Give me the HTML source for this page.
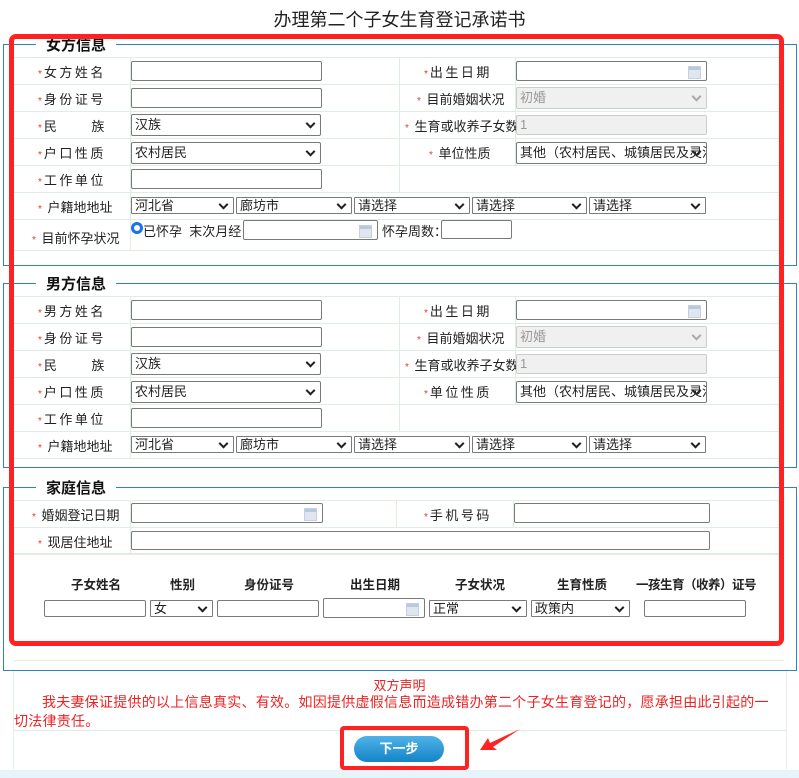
<!DOCTYPE html>
<html><head><meta charset="utf-8"><style>
*{margin:0;padding:0;box-sizing:border-box}
body{width:799px;height:778px;background:#fff;font-family:"Liberation Sans","Noto Sans CJK SC",sans-serif;font-size:13px;color:#222;position:relative;overflow:hidden}
.a{position:absolute}
.in{position:absolute;border:1px solid #7a7a7a;border-radius:2px;background:#fff;height:20px}
.sel{position:absolute;border:1px solid #7a7a7a;border-radius:2px;background:#fff;height:22px;font-size:13px;line-height:20px;padding-left:3px;white-space:nowrap;overflow:hidden}
.sel.s{height:17px;line-height:15px;border-radius:1px}
.sel:after{content:"";position:absolute;right:6px;top:50%;width:5px;height:5px;border-right:2px solid #222;border-bottom:2px solid #222;transform:translateY(-70%) rotate(45deg)}
.dis{background:#f0f0f0;border-color:#ccc;color:#999}
.dis.sel:after{border-color:#aaa}
.lab{position:absolute;font-size:13px;letter-spacing:2.5px;white-space:nowrap}
.lab b{color:#e33;font-weight:normal;font-size:10px;margin-right:2px;letter-spacing:0}
.hl{position:absolute;height:1px;background:#dfeee0}
.vl{position:absolute;width:1px;background:#dfeee0}
.fs{position:absolute;border:1px solid #2e86b8}
.lg{position:absolute;background:#fff;font-weight:bold;font-size:15px;padding:0 10px;color:#111}
.cal:after{content:"";position:absolute;right:5px;top:4px;width:11px;height:11px;background:linear-gradient(#b9c8de 0 3px,#dfe6f0 3px);border:1px solid #c5d0e0}
.hd{position:absolute;font-weight:bold;font-size:12.5px;top:574px}
</style></head><body>
<div class="a" style="left:0;top:6px;width:799px;text-align:center;font-size:18px;color:#222">办理第二个子女生育登记承诺书</div>

<div class="fs" style="left:3px;top:44px;width:794px;height:222px"></div>
<div class="lg" style="left:36px;top:34px">女方信息</div>
<div class="hl" style="left:14px;top:57px;width:770px"></div>
<div class="hl" style="left:14px;top:84px;width:770px"></div>
<div class="hl" style="left:14px;top:111px;width:770px"></div>
<div class="hl" style="left:14px;top:138px;width:770px"></div>
<div class="hl" style="left:14px;top:165px;width:770px"></div>
<div class="hl" style="left:14px;top:192px;width:770px"></div>
<div class="hl" style="left:14px;top:219px;width:770px"></div>
<div class="hl" style="left:14px;top:250px;width:770px"></div>
<div class="vl" style="left:130px;top:57px;height:193px"></div>
<div class="vl" style="left:399px;top:57px;height:135px"></div>
<div class="vl" style="left:515px;top:57px;height:108px"></div>

<div class="lab" style="left:38px;top:62px"><b>*</b>女方姓名</div>
<div class="lab" style="left:38px;top:89px"><b>*</b>身份证号</div>
<div class="lab" style="left:38px;top:116px"><b>*</b>民<span style="margin-left:32px">族</span></div>
<div class="lab" style="left:38px;top:143px"><b>*</b>户口性质</div>
<div class="lab" style="left:38px;top:170px"><b>*</b>工作单位</div>
<div class="lab" style="left:38px;top:197px;letter-spacing:0"><b>*</b> 户籍地地址</div>
<div class="lab" style="left:32px;top:228px;letter-spacing:0"><b>*</b> 目前怀孕状况</div>
<div class="in" style="left:131px;top:61px;width:191px"></div>
<div class="in" style="left:131px;top:88px;width:191px"></div>
<div class="sel" style="left:131px;top:114px;width:190px">汉族</div>
<div class="sel" style="left:131px;top:142px;width:190px">农村居民</div>
<div class="in" style="left:131px;top:169px;width:191px"></div>
<div class="sel s" style="left:131px;top:197px;width:103px">河北省</div>
<div class="sel s" style="left:236px;top:197px;width:116px">廊坊市</div>
<div class="sel s" style="left:354px;top:197px;width:116px">请选择</div>
<div class="sel s" style="left:472px;top:197px;width:115px">请选择</div>
<div class="sel s" style="left:589px;top:197px;width:117px">请选择</div>
<div class="a" style="left:131px;top:222px;width:12px;height:12px;border-radius:50%;border:3px solid #1a73e8;background:#fff"></div>
<div class="a" style="left:143px;top:221px;font-size:13px">已怀孕&nbsp; 末次月经：</div>
<div class="in cal" style="left:243px;top:220px;width:135px"></div>
<div class="a" style="left:382px;top:221px">怀孕周数：</div>
<div class="in" style="left:441px;top:220px;width:71px;height:19px"></div>

<div class="lab" style="left:424px;top:62px"><b>*</b>出生日期</div>
<div class="lab" style="left:417px;top:89px;letter-spacing:0"><b>*</b> 目前婚姻状况</div>
<div class="lab" style="left:405px;top:116px;letter-spacing:0"><b>*</b> 生育或收养子女数</div>
<div class="lab" style="left:429px;top:143px;letter-spacing:0"><b>*</b> 单位性质</div>
<div class="in cal" style="left:516px;top:61px;width:191px"></div>
<div class="sel dis" style="left:516px;top:87px;width:191px">初婚</div>
<div class="in dis" style="left:516px;top:115px;width:191px;padding-left:3px;line-height:18px">1</div>
<div class="sel" style="left:516px;top:142px;width:191px;padding-right:18px">其他（农村居民、城镇居民及灵活就业）</div>

<div class="fs" style="left:3px;top:283px;width:794px;height:185px"></div>
<div class="lg" style="left:36px;top:273px">男方信息</div>
<div class="hl" style="left:14px;top:296px;width:770px"></div>
<div class="hl" style="left:14px;top:323px;width:770px"></div>
<div class="hl" style="left:14px;top:350px;width:770px"></div>
<div class="hl" style="left:14px;top:377px;width:770px"></div>
<div class="hl" style="left:14px;top:404px;width:770px"></div>
<div class="hl" style="left:14px;top:431px;width:770px"></div>
<div class="hl" style="left:14px;top:458px;width:770px"></div>
<div class="vl" style="left:130px;top:296px;height:162px"></div>
<div class="vl" style="left:399px;top:296px;height:135px"></div>
<div class="vl" style="left:515px;top:296px;height:108px"></div>
<div class="lab" style="left:38px;top:301px"><b>*</b>男方姓名</div>
<div class="lab" style="left:38px;top:328px"><b>*</b>身份证号</div>
<div class="lab" style="left:38px;top:355px"><b>*</b>民<span style="margin-left:32px">族</span></div>
<div class="lab" style="left:38px;top:382px"><b>*</b>户口性质</div>
<div class="lab" style="left:38px;top:409px"><b>*</b>工作单位</div>
<div class="lab" style="left:38px;top:436px;letter-spacing:0"><b>*</b> 户籍地地址</div>
<div class="in" style="left:131px;top:300px;width:191px"></div>
<div class="in" style="left:131px;top:327px;width:191px"></div>
<div class="sel" style="left:131px;top:353px;width:190px">汉族</div>
<div class="sel" style="left:131px;top:381px;width:190px">农村居民</div>
<div class="in" style="left:131px;top:408px;width:191px"></div>
<div class="sel s" style="left:131px;top:436px;width:103px">河北省</div>
<div class="sel s" style="left:236px;top:436px;width:116px">廊坊市</div>
<div class="sel s" style="left:354px;top:436px;width:116px">请选择</div>
<div class="sel s" style="left:472px;top:436px;width:115px">请选择</div>
<div class="sel s" style="left:589px;top:436px;width:117px">请选择</div>
<div class="lab" style="left:424px;top:301px"><b>*</b>出生日期</div>
<div class="lab" style="left:417px;top:328px;letter-spacing:0"><b>*</b> 目前婚姻状况</div>
<div class="lab" style="left:405px;top:355px;letter-spacing:0"><b>*</b> 生育或收养子女数</div>
<div class="lab" style="left:424px;top:382px"><b>*</b>单位性质</div>
<div class="in cal" style="left:516px;top:300px;width:191px"></div>
<div class="sel dis" style="left:516px;top:326px;width:191px">初婚</div>
<div class="in dis" style="left:516px;top:354px;width:191px;padding-left:3px;line-height:18px">1</div>
<div class="sel" style="left:516px;top:381px;width:191px;padding-right:18px">其他（农村居民、城镇居民及灵活就业）</div>

<div class="fs" style="left:3px;top:487px;width:794px;height:184px"></div>
<div class="lg" style="left:36px;top:477px">家庭信息</div>
<div class="hl" style="left:14px;top:500px;width:770px"></div>
<div class="hl" style="left:14px;top:527px;width:770px"></div>
<div class="hl" style="left:14px;top:553px;width:770px;height:2px"></div>
<div class="hl" style="left:14px;top:660px;width:770px"></div>
<div class="vl" style="left:130px;top:500px;height:53px"></div>
<div class="vl" style="left:396px;top:500px;height:27px"></div>
<div class="vl" style="left:513px;top:500px;height:27px"></div>
<div class="lab" style="left:32px;top:505px;letter-spacing:0"><b>*</b> 婚姻登记日期</div>
<div class="lab" style="left:38px;top:532px;letter-spacing:0"><b>*</b> 现居住地址</div>
<div class="lab" style="left:424px;top:505px"><b>*</b>手机号码</div>
<div class="in cal" style="left:131px;top:503px;width:192px"></div>
<div class="in" style="left:514px;top:503px;width:196px"></div>
<div class="in" style="left:131px;top:531px;width:579px;height:19px"></div>
<div class="hd" style="left:71px">子女姓名</div>
<div class="hd" style="left:170px">性别</div>
<div class="hd" style="left:244px">身份证号</div>
<div class="hd" style="left:350px">出生日期</div>
<div class="hd" style="left:455px">子女状况</div>
<div class="hd" style="left:557px">生育性质</div>
<div class="hd" style="left:636px;letter-spacing:-0.5px">一孩生育（收养）证号</div>
<div class="in" style="left:44px;top:600px;width:102px;height:17px"></div>
<div class="sel s" style="left:150px;top:600px;width:63px">女</div>
<div class="in" style="left:217px;top:600px;width:102px;height:17px"></div>
<div class="in cal" style="left:323px;top:598px;width:102px;height:20px"></div>
<div class="sel s" style="left:429px;top:600px;width:98px">正常</div>
<div class="sel s" style="left:531px;top:600px;width:99px">政策内</div>
<div class="in" style="left:644px;top:600px;width:102px;height:17px"></div>

<div class="a" style="left:9px;top:34px;width:775px;height:612px;border:5px solid #f22;border-radius:7px"></div>

<div class="vl" style="left:13px;top:671px;height:98px;background:#e4efe6"></div>
<div class="vl" style="left:786px;top:671px;height:98px;background:#e4efe6"></div>
<div class="hl" style="left:13px;top:730px;width:774px"></div>
<div class="a" style="left:0;top:675px;width:799px;text-align:center;color:#e22;font-size:13px">双方声明</div>
<div class="a" style="left:14px;top:693px;width:768px;color:#e22;font-size:14px;line-height:19px;text-indent:28px;letter-spacing:0.25px">我夫妻保证提供的以上信息真实、有效。如因提供虚假信息而造成错办第二个子女生育登记的，愿承担由此引起的一切法律责任。</div>
<div class="a" style="left:354px;top:736px;width:90px;height:26px;border-radius:13px;background:linear-gradient(#4fb3e8,#1484c6);color:#fff;font-weight:bold;text-align:center;line-height:26px;font-size:13px">下一步</div>
<div class="a" style="left:340px;top:726px;width:129px;height:44px;border:4px solid #f22;border-radius:4px"></div>
<svg class="a" style="left:474px;top:726px" width="52" height="30"><path d="M6 24 L14 12 L16 17 L46 3 L19 21 L23 24 Z" fill="#f22"/></svg>
<div class="a" style="left:0;top:770px;width:799px;height:8px;background:#e6f5fb"></div>
</body></html>
